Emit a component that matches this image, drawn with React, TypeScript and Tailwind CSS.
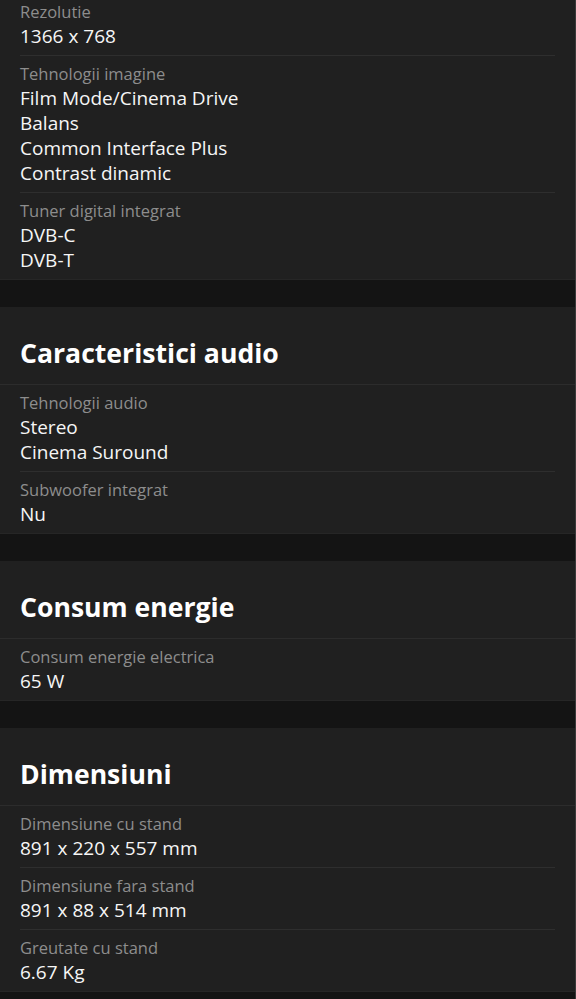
const sections: { title?: string; items: { label: string; values: string[] }[] }[] = [
  {
    items: [
      { label: "Rezolutie", values: ["1366 x 768"] },
      {
        label: "Tehnologii imagine",
        values: ["Film Mode/Cinema Drive", "Balans", "Common Interface Plus", "Contrast dinamic"],
      },
      { label: "Tuner digital integrat", values: ["DVB-C", "DVB-T"] },
    ],
  },
  {
    title: "Caracteristici audio",
    items: [
      { label: "Tehnologii audio", values: ["Stereo", "Cinema Suround"] },
      { label: "Subwoofer integrat", values: ["Nu"] },
    ],
  },
  {
    title: "Consum energie",
    items: [{ label: "Consum energie electrica", values: ["65 W"] }],
  },
  {
    title: "Dimensiuni",
    items: [
      { label: "Dimensiune cu stand", values: ["891 x 220 x 557 mm"] },
      { label: "Dimensiune fara stand", values: ["891 x 88 x 514 mm"] },
      { label: "Greutate cu stand", values: ["6.67 Kg"] },
    ],
  },
]

export default function App() {
  return (
    <div
      className="w-[576px] h-[999px] overflow-hidden bg-[#141414] border-r border-[#3a3a3a]"
      style={{ fontFamily: '"Open Sans", "Noto Sans", sans-serif' }}
    >
      <div className="flex flex-col gap-[27px] -mt-[6px]">
        {sections.map((section, i) => (
          <section key={i} className="bg-[#202020] border-b border-[#262626]">
            {section.title && (
              <h2 className="px-5 pt-[30px] pb-[15px] text-[26.6px] leading-8 font-bold text-white border-b border-[#2c2c2c]">
                {section.title}
              </h2>
            )}
            <div className="px-5">
              {section.items.map((item, j) => (
                <div
                  key={j}
                  className={`py-[6px] ${j < section.items.length - 1 ? "border-b border-[#2e2e2e]" : ""}`}
                >
                  <div className="text-[16.5px] leading-6 text-[#8d8d8d]">{item.label}</div>
                  {item.values.map((v) => (
                    <div key={v} className="text-[19px] leading-[25px] font-medium text-[#f6f6f6]">
                      {v}
                    </div>
                  ))}
                </div>
              ))}
            </div>
          </section>
        ))}
      </div>
    </div>
  )
}
